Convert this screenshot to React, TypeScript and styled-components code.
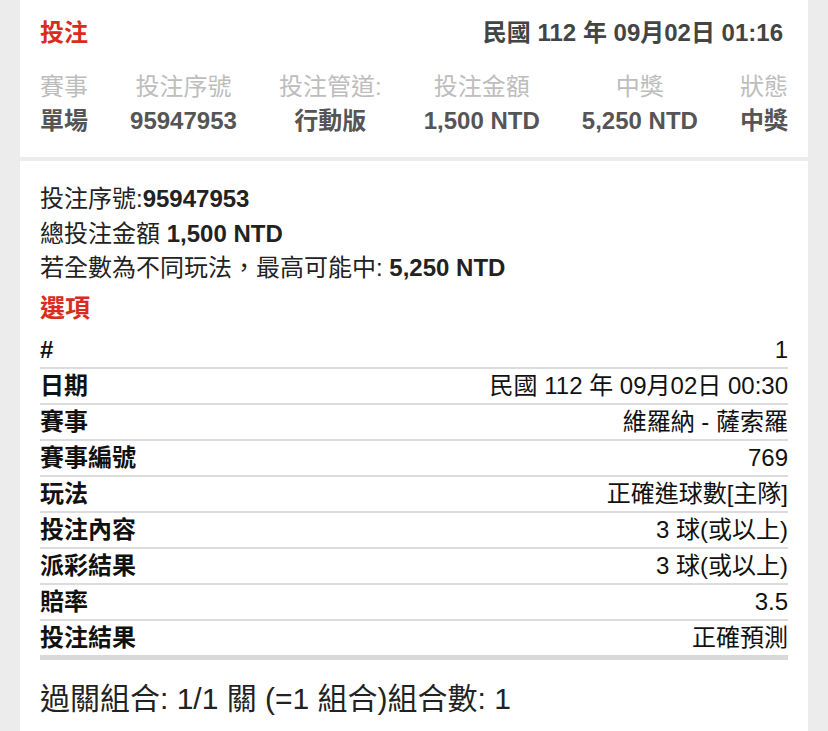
import styled, { createGlobalStyle } from 'styled-components';

const GlobalStyle = createGlobalStyle`
  html, body {
    margin: 0;
    padding: 0;
    background: #ececec;
  }
  body {
    font-family: "Liberation Sans", "Noto Sans CJK TC", sans-serif;
    color: #222;
  }
`;

const Page = styled.div`
  width: 828px;
  min-height: 731px;
  padding: 0 20px;
  box-sizing: border-box;
  display: flex;
  flex-direction: column;
  gap: 4px;
`;

const Card = styled.section`
  background: #fff;
  padding: 0 20px;
`;

const TopCard = styled(Card)`
  height: 157px;
  box-sizing: border-box;
  padding-top: 16px;
`;

const TitleRow = styled.div`
  display: flex;
  justify-content: space-between;
  align-items: center;
  height: 28px;
  padding-right: 5px;
`;

const RedTitle = styled.h2<{ $size?: number }>`
  margin: 0;
  font-size: ${(p) => p.$size ?? 24}px;
  font-weight: 700;
  color: #d92b20;
`;

const DateText = styled.span`
  font-size: 24px;
  font-weight: 700;
  color: #444;
`;

const Summary = styled.div`
  display: flex;
  justify-content: space-between;
  margin-top: 29px;
`;

const SummaryCol = styled.div`
  display: flex;
  flex-direction: column;
  align-items: center;
  gap: 6px;
`;

const SummaryLabel = styled.span`
  font-size: 24px;
  line-height: 28px;
  color: #bdbdbd;
`;

const SummaryValue = styled.span`
  font-size: 24px;
  line-height: 28px;
  font-weight: 700;
  color: #555;
`;

const DetailCard = styled(Card)`
  flex: 1;
  padding-top: 21px;
  padding-bottom: 20px;
`;

const InfoLine = styled.div`
  font-size: 24px;
  line-height: 34.5px;
  color: #222;

  b {
    font-weight: 700;
  }
`;

const OptionsTitle = styled(RedTitle)`
  margin-top: 6px;
  line-height: 32px;
`;

const Table = styled.div`
  margin-top: 9px;
  display: flex;
  flex-direction: column;
`;

const Row = styled.div<{ $last?: boolean }>`
  display: flex;
  justify-content: space-between;
  align-items: center;
  height: 34px;
  border-bottom: ${(p) => (p.$last ? '5px solid #d9d9d9' : '2px solid #dcdcdc')};
  font-size: 24px;
  line-height: 28px;
  color: #111;
`;

const RowLabel = styled.span`
  font-weight: 700;
`;

const RowValue = styled.span`
  font-weight: 400;
`;

const Footer = styled.div`
  margin-top: 21px;
  font-size: 30px;
  line-height: 36px;
  color: #222;
`;

const summary = [
  { label: '賽事', value: '單場' },
  { label: '投注序號', value: '95947953' },
  { label: '投注管道:', value: '行動版' },
  { label: '投注金額', value: '1,500 NTD' },
  { label: '中獎', value: '5,250 NTD' },
  { label: '狀態', value: '中獎' },
];

const rows = [
  ['#', '1'],
  ['日期', '民國 112 年 09月02日 00:30'],
  ['賽事', '維羅納 - 薩索羅'],
  ['賽事編號', '769'],
  ['玩法', '正確進球數[主隊]'],
  ['投注內容', '3 球(或以上)'],
  ['派彩結果', '3 球(或以上)'],
  ['賠率', '3.5'],
  ['投注結果', '正確預測'],
];

export default function App() {
  return (
    <>
      <GlobalStyle />
      <Page>
        <TopCard>
          <TitleRow>
            <RedTitle>投注</RedTitle>
            <DateText>民國 112 年 09月02日 01:16</DateText>
          </TitleRow>
          <Summary>
            {summary.map((s) => (
              <SummaryCol key={s.label}>
                <SummaryLabel>{s.label}</SummaryLabel>
                <SummaryValue>{s.value}</SummaryValue>
              </SummaryCol>
            ))}
          </Summary>
        </TopCard>
        <DetailCard>
          <InfoLine>
            投注序號:<b>95947953</b>
          </InfoLine>
          <InfoLine>
            總投注金額 <b>1,500 NTD</b>
          </InfoLine>
          <InfoLine>
            若全數為不同玩法，最高可能中: <b>5,250 NTD</b>
          </InfoLine>
          <OptionsTitle $size={25}>選項</OptionsTitle>
          <Table>
            {rows.map(([label, value], i) => (
              <Row key={label} $last={i === rows.length - 1}>
                <RowLabel>{label}</RowLabel>
                <RowValue>{value}</RowValue>
              </Row>
            ))}
          </Table>
          <Footer>過關組合: 1/1 關 (=1 組合)組合數: 1</Footer>
        </DetailCard>
      </Page>
    </>
  );
}
